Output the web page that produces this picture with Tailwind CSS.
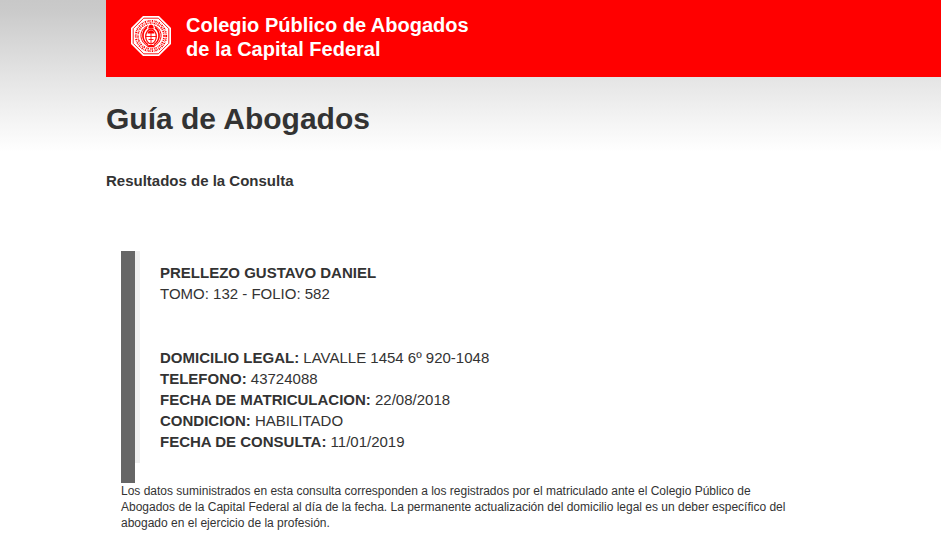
<!DOCTYPE html>
<html lang="es">
<head>
  <meta charset="UTF-8" />
  <meta name="viewport" content="width=device-width, initial-scale=1" />
  <title>Guía de Abogados - Colegio Público de Abogados de la Capital Federal</title>
  <script src="https://cdn.jsdelivr.net/npm/@tailwindcss/browser@4"></script>
</head>
<body class="bg-white bg-[linear-gradient(#c8c8c8_0px,#cacaca_10px,#e4e4e4_76px,#ffffff_152px)] bg-no-repeat font-['Liberation_Sans',Arial,sans-serif] text-[#333333]">
  <div class="pl-[106px]">
    <header class="flex h-[77px] items-start gap-3.5 bg-[#ff0000] pt-[13px] pl-6 text-white">
      <!-- Seal -->
      <svg class="mt-[2px] size-[42px] shrink-0" viewBox="0 0 42 42" fill="none" aria-hidden="true">
        <path d="M13 1h16l12 12v16L29 41H13L1 29V13z" fill="#fff" />
        <path d="M13.700 3.200h14.600l10.500 10.500v14.600L28.300 38.800H13.700L3.200 28.300V13.700z" stroke="#f00" stroke-width=".9" />
        <circle cx="21" cy="21" r="15.200" stroke="#f00" stroke-width="1.800" stroke-dasharray="1.300 .9 .6 .8" />
        <circle cx="21" cy="21" r="13" stroke="#f00" stroke-width="1.600" stroke-dasharray=".9 1.100 1.400 .7" />
        <path d="M18 10.800c-5 2-7.400 6-7 10.700.4 4.300 3 8 7.500 9.700M24 10.800c5 2 7.400 6 7 10.700-.4 4.300-3 8-7.500 9.700" stroke="#f00" stroke-width="1" />
        <path d="M17 12.500c-3.300 2.500-4.500 5.500-4 9.500.4 3.200 2 5.700 5 7.700M25 12.500c3.300 2.500 4.500 5.500 4 9.500-.4 3.200-2 5.700-5 7.700" stroke="#f00" stroke-width="1.600" />
        <ellipse cx="21" cy="21.500" rx="5.300" ry="7.300" fill="#fff" stroke="#f00" stroke-width="1.200" />
        <path d="M17.500 18.500c.4-2.200 1.700-3.200 3.500-3.200s3.100 1 3.500 3.200z" fill="#f00" />
        <path d="M15.500 21.500h11M21 18v10M18.500 24.500h5" stroke="#f00" stroke-width=".9" />
        <path d="M18.200 13.500l.6-3 2.200-1 2.200 1 .6 3zM18.500 30h5l1.500 2.300h-8z" fill="#f00" />
      </svg>
      <p class="text-[20px] leading-6 font-bold">Colegio Público de Abogados<br>de la Capital Federal</p>
    </header>

    <main class="pr-36">
      <h1 class="mt-6 text-[30px] leading-9 font-bold">Guía de Abogados</h1>
      <h2 class="mt-[33px] text-[15px] leading-[21px] font-bold">Resultados de la Consulta</h2>

      <!-- Result -->
      <section class="mt-[60px] ml-[15px] border-l-[14px] border-[#666666] pb-5">
        <div class="border-l-[5px] border-[#eeeeee] pt-[11px] pb-[11px] pl-5 text-[15px] leading-[21px]">
          <h3 class="font-bold">PRELLEZO GUSTAVO DANIEL</h3>
          <p>TOMO: 132 - FOLIO: 582</p>
          <div class="mt-[43px]">
            <p><b>DOMICILIO LEGAL:</b> LAVALLE 1454 6º 920-1048</p>
            <p><b>TELEFONO:</b> 43724088</p>
            <p><b>FECHA DE MATRICULACION:</b> 22/08/2018</p>
            <p><b>CONDICION:</b> HABILITADO</p>
            <p><b>FECHA DE CONSULTA:</b> 11/01/2019</p>
          </div>
        </div>
      </section>

      <p class="ml-[15px] text-[12px] leading-4">Los datos suministrados en esta consulta corresponden a los registrados por el matriculado ante el Colegio Público de Abogados de la Capital Federal al día de la fecha. La permanente actualización del domicilio legal es un deber específico del abogado en el ejercicio de la profesión.</p>
    </main>
  </div>
</body>
</html>
